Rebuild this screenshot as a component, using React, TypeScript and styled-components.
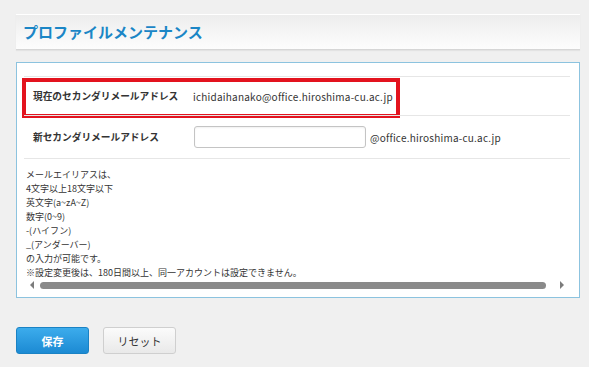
import * as React from "react";
import styled, { createGlobalStyle } from "styled-components";

const GlobalStyle = createGlobalStyle`
  body {
    margin: 0;
    background: #f0f0f0;
    font-family: "Noto Sans CJK JP", "Noto Sans", sans-serif;
    color: #333;
  }
`;

const Page = styled.div`
  padding: 14px 9px 0 16px;
`;

const Header = styled.div`
  height: 34px;
  display: flex;
  align-items: center;
  padding-left: 7px;
  border-top: 1px solid #ffffff;
  border-bottom: 1px solid #d6d6d6;
  background: linear-gradient(#ededed, #fdfdfd);
  box-shadow: 0 1px 1px rgba(0, 0, 0, 0.05);
`;

const Title = styled.h1`
  margin: 0 0 2px;
  font-size: 15px;
  font-weight: bold;
  color: #1b86c6;
`;

const Panel = styled.div`
  margin-top: 12px;
  height: 236px;
  box-sizing: border-box;
  border: 1px solid #8cc3df;
  background: #fff;
  padding: 13px 9px 0 7px;
`;

const Table = styled.div`
  border-bottom: 1px solid #e6e6e6;
`;

const Row = styled.div<{ $h: number }>`
  position: relative;
  display: grid;
  grid-template-columns: 160px 1fr;
  align-items: center;
  height: ${(p) => p.$h}px;
  padding-left: 9px;
  border-top: 1px solid #e6e6e6;
  font-size: 10px;
`;

const Label = styled.div`
  font-size: 9.7px;
  font-weight: bold;
  color: #333;
`;

const Value = styled.div`
  display: flex;
  align-items: center;
  color: #333;
  letter-spacing: 0.22px;
`;

const Highlight = styled.div`
  position: absolute;
  left: -2px;
  top: 1px;
  width: 378px;
  height: 40px;
  box-sizing: border-box;
  border: 4px solid #e3131e;
  pointer-events: none;
`;

const Input = styled.input`
  width: 172px;
  height: 22px;
  box-sizing: border-box;
  margin: 0 4px 0 1px;
  border: 1px solid #c4c4c4;
  border-radius: 3px;
  background: #fff;
  box-shadow: inset 0 1px 2px rgba(0, 0, 0, 0.06);
`;

const Notes = styled.div`
  margin-top: 9px;
  padding-left: 2px;
  font-size: 9px;
  line-height: 14px;
  color: #333;
  white-space: pre;
`;

const ScrollBar = styled.div`
  display: flex;
  align-items: center;
  height: 10px;
  padding: 0 6px;
  gap: 6px;
`;

const Arrow = styled.div<{ $dir: "l" | "r" }>`
  width: 0;
  height: 0;
  border-top: 4px solid transparent;
  border-bottom: 4px solid transparent;
  ${(p) =>
    p.$dir === "l"
      ? "border-right: 4px solid #7c7c7c;"
      : "border-left: 4px solid #7c7c7c;"}
`;

const Thumb = styled.div`
  flex: 1;
  height: 7px;
  border-radius: 4px;
  background: #8a8a8a;
  margin-right: 8px;
`;

const Buttons = styled.div`
  display: flex;
  gap: 14px;
  margin-top: 29px;
`;

const Button = styled.button<{ $primary?: boolean }>`
  width: 73px;
  height: 27px;
  border-radius: 3px;
  font-family: inherit;
  font-size: 11px;
  cursor: pointer;
  ${(p) =>
    p.$primary
      ? `
    border: 1px solid #1a82c4;
    background: linear-gradient(#3cacec, #1c8ad3);
    color: #fff;
    font-weight: bold;
  `
      : `
    border: 1px solid #cfcfcf;
    background: linear-gradient(#fbfbfb, #e9e9e9);
    color: #333;
  `}
`;

const notes = [
  "メールエイリアスは、",
  "4文字以上18文字以下",
  "英文字(a~zA~Z)",
  "数字(0~9)",
  "-(ハイフン)",
  "_(アンダーバー)",
  "の入力が可能です。",
  "※設定変更後は、180日間以上、同一アカウントは設定できません。",
];

export default function App() {
  return (
    <>
      <GlobalStyle />
      <Page>
        <Header>
          <Title>プロファイルメンテナンス</Title>
        </Header>
        <Panel>
          <Table>
            <Row $h={38}>
              <Label>現在のセカンダリメールアドレス</Label>
              <Value>ichidaihanako@office.hiroshima-cu.ac.jp</Value>
              <Highlight />
            </Row>
            <Row $h={42}>
              <Label>新セカンダリメールアドレス</Label>
              <Value>
                <Input type="text" />
                @office.hiroshima-cu.ac.jp
              </Value>
            </Row>
          </Table>
          <Notes>{notes.join("\n")}</Notes>
          <ScrollBar>
            <Arrow $dir="l" />
            <Thumb />
            <Arrow $dir="r" />
          </ScrollBar>
        </Panel>
        <Buttons>
          <Button $primary>保存</Button>
          <Button>リセット</Button>
        </Buttons>
      </Page>
    </>
  );
}
